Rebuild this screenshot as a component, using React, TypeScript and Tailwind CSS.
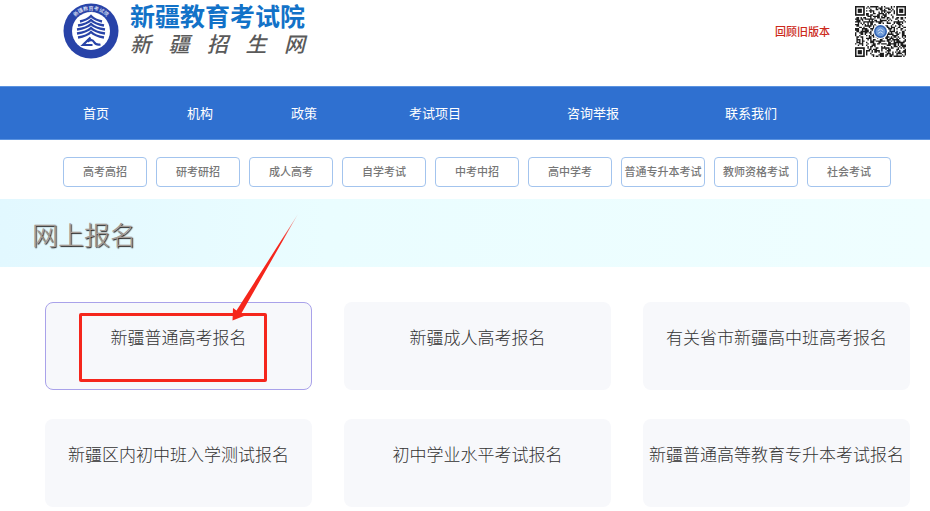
const navItems = ["首页", "机构", "政策", "考试项目", "咨询举报", "联系我们"];

const categories = [
  "高考高招",
  "研考研招",
  "成人高考",
  "自学考试",
  "中考中招",
  "高中学考",
  "普通专升本考试",
  "教师资格考试",
  "社会考试",
];

const entries = [
  "新疆普通高考报名",
  "新疆成人高考报名",
  "有关省市新疆高中班高考报名",
  "新疆区内初中班入学测试报名",
  "初中学业水平考试报名",
  "新疆普通高等教育专升本考试报名",
];

const QR_SIZE = 37;

function isFinder(x: number, y: number) {
  const nearX = x < 8 || x >= QR_SIZE - 8;
  const nearY = y < 8 || y >= QR_SIZE - 8;
  return nearX && nearY && !(x >= QR_SIZE - 8 && y >= QR_SIZE - 8);
}

function buildQrPath() {
  let seed = 20231;
  let d = "";
  for (let y = 0; y < QR_SIZE; y++) {
    for (let x = 0; x < QR_SIZE; x++) {
      seed = (seed * 48271) % 2147483647;
      if (isFinder(x, y)) continue;
      if (seed / 2147483647 < 0.52) d += `M${x} ${y}h1v1h-1z`;
    }
  }
  return d;
}

const qrPath = buildQrPath();

function QrCode() {
  const corners = [
    [0, 0],
    [QR_SIZE - 7, 0],
    [0, QR_SIZE - 7],
  ];
  return (
    <svg viewBox={`0 0 ${QR_SIZE} ${QR_SIZE}`} className="size-[51px]" role="img" aria-label="二维码">
      <path d={qrPath} fill="#1c1c1c" />
      {corners.map(([x, y]) => (
        <g key={`${x}-${y}`}>
          <rect x={x + 0.5} y={y + 0.5} width="6" height="6" fill="#fff" stroke="#1c1c1c" strokeWidth="1.2" />
          <rect x={x + 2} y={y + 2} width="3" height="3" fill="#1c1c1c" />
        </g>
      ))}
      <circle cx="18.5" cy="18.5" r="5.4" fill="#fff" />
      <circle cx="18.5" cy="18.5" r="4.1" fill="#6f9bd8" stroke="#3566b5" strokeWidth="1.2" />
      <path d="M16.500 18l2-1.200l2 1.200M16.500 20l2-1.200l2 1.200" fill="none" stroke="#c9dcf5" strokeWidth="0.7" />
    </svg>
  );
}

function Emblem() {
  return (
    <svg viewBox="0 0 56 56" className="size-14 shrink-0" role="img" aria-label="新疆教育考试院徽标">
      <defs>
        <path id="emblem-arc" d="M8.500 20A21 21 0 0 1 47.500 20" />
      </defs>
      <circle cx="28" cy="28" r="27.5" fill="#2843a8" />
      <circle cx="28" cy="28" r="19" fill="#fff" />
      <text
        fill="#e6ebfa"
        fontSize="5"
        fontWeight="500"
        textAnchor="middle"
        fontFamily="'Liberation Sans', 'Noto Sans CJK SC', sans-serif"
      >
        <textPath href="#emblem-arc" startOffset="50%">
          新疆教育考试院
        </textPath>
      </text>
      <g fill="none" stroke="#2843a8" strokeWidth="2.4">
        <path d="M17 18.500Q24 17 28 13Q32 17 39 18.500" />
        <path d="M15 22.500Q24 21 28 17Q32 21 41 22.500" />
        <path d="M14 26.500Q24 25 28 21Q32 25 42 26.500" />
        <path d="M14 30.500Q24 29 28 25Q32 29 42 30.500" />
        <path d="M15 34.500Q24 33 28 29Q32 33 41 34.500" />
      </g>
      <path
        d="M27.500 34.500L20 42H29.500M24.500 38.500Q29 35.500 31 39T37.500 41.500"
        fill="none"
        stroke="#2843a8"
        strokeWidth="2.2"
      />
    </svg>
  );
}

function Header() {
  return (
    <header className="flex h-[86px] items-start justify-between pl-[63px] pr-6">
      <a href="#" className="flex items-start gap-[11px] font-['Liberation_Sans','Noto_Sans_CJK_SC',sans-serif]">
        <span className="pt-[3px]">
          <Emblem />
        </span>
        <span className="flex flex-col">
          <span className="pt-0.5 text-[25px] font-bold leading-[30px] text-[#1272c8]">新疆教育考试院</span>
          <span className="flex justify-between text-[21px] font-medium italic leading-[26px] text-[#5a5a5a]">
            {["新", "疆", "招", "生", "网"].map((char) => (
              <span key={char}>{char}</span>
            ))}
          </span>
        </span>
      </a>
      <div className="flex items-center gap-[25px] pt-1.5">
        <a href="#" className="text-[11px] font-medium text-[#cc2a1c]">
          回顾旧版本
        </a>
        <QrCode />
      </div>
    </header>
  );
}

function Banner() {
  return (
    <section className="bg-linear-to-r from-[#e2f8ff] via-[#eafdff] via-35% to-[#effeff] px-8 pt-[17px] pb-[15px]">
      <h1 className="text-[26px] font-light leading-9 text-[#a39a94] [text-shadow:1px_1px_1px_#222]">网上报名</h1>
    </section>
  );
}

// Red frame and arrow pointing at the first entry
function Highlight() {
  return (
    <>
      <div className="pointer-events-none absolute top-[11px] right-[45px] left-[34px] h-[69px] rounded-xs border-[3px] border-[#f5261c]" />
      <svg
        viewBox="0 0 68 108"
        className="pointer-events-none absolute -top-[89px] left-[186px] h-[108px] w-[68px]"
        aria-hidden="true"
      >
        <defs>
          <linearGradient id="arrow-fade" x1="1" y1="0" x2="0" y2="1">
            <stop offset="0" stopColor="#f5261c" stopOpacity="0.3" />
            <stop offset="0.25" stopColor="#f5261c" />
          </linearGradient>
        </defs>
        <path d="M67 1L10 101L13 103L1.500 107.500L2 95L5.500 97.500Z" fill="url(#arrow-fade)" />
      </svg>
    </>
  );
}

export default function App() {
  return (
    <div className="bg-white font-['Noto_Sans_CJK_SC',sans-serif]">
      <Header />

      <nav className="flex h-[54px] items-center border-y border-[#5b93e0] bg-[#2f70d0] px-11">
        {navItems.map((item) => (
          <a
            key={item}
            href="#"
            className={`text-[13px] text-white ${item.length > 2 ? "px-[53px]" : "px-[39px]"}`}
          >
            {item}
          </a>
        ))}
      </nav>

      <div className="grid grid-cols-9 gap-[9px] pt-[17px] pr-[39px] pb-3 pl-[63px]">
        {categories.map((category) => (
          <button
            key={category}
            type="button"
            className="h-[30px] whitespace-nowrap rounded border border-[#a3c4ee] bg-white pb-0.5 text-[11px] font-medium text-[#777]"
          >
            {category}
          </button>
        ))}
      </div>

      <Banner />

      <main className="grid grid-cols-3 gap-x-8 gap-y-[29px] pt-[35px] pr-5 pb-1 pl-[45px]">
        {entries.map((entry, index) => (
          <div key={entry} className="relative">
            <a
              href="#"
              className={`block h-[88px] whitespace-nowrap rounded-lg border bg-[#f7f8fb] pt-[22px] text-center text-[17px] leading-6 font-light text-[#333] ${
                index === 0 ? "border-[#a9a2ea]" : "border-transparent"
              }`}
            >
              {entry}
            </a>
            {index === 0 && <Highlight />}
          </div>
        ))}
      </main>
    </div>
  );
}
